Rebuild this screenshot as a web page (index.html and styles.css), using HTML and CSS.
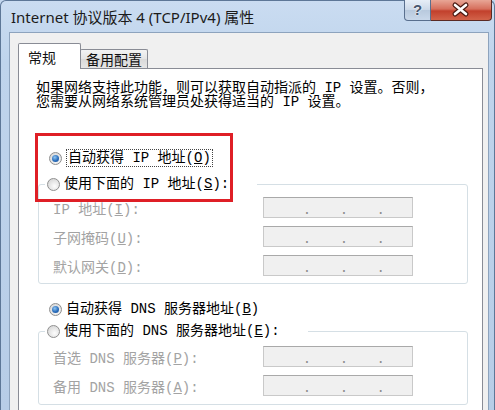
FILE: index.html
```html
<!DOCTYPE html>
<html lang="zh-CN">
<head>
    <meta charset="UTF-8">
    <title>Internet 协议版本 4 (TCP/IPv4) 属性</title>
    <link rel="stylesheet" href="styles.css">
</head>
<body>
    <div class="window">
        <div class="titlebar">
            <div class="title">Internet 协议版本 4 (TCP/IPv4) 属性</div>
            <div class="caption-buttons">
                <div class="btn-help">?</div>
                <div class="btn-close">
                    <svg width="59" height="19" viewBox="0 0 59 19">
                        <path d="M24 5 L35 14 M35 5 L24 14" stroke="#4a1a12" stroke-width="5" stroke-linecap="round"/>
                        <path d="M24 5 L35 14 M35 5 L24 14" stroke="#fff" stroke-width="2.6" stroke-linecap="round"/>
                    </svg>
                </div>
            </div>
        </div>
        <div class="client">
            <div class="tabs">
                <div class="tab active">常规</div>
                <div class="tab">备用配置</div>
            </div>
            <div class="page">
                <p class="intro">如果网络支持此功能，则可以获取自动指派的 IP 设置。否则，<br>您需要从网络系统管理员处获得适当的 IP 设置。</p>

                <div class="option opt-ip"><span class="radio on"></span><span class="label focus">自动获得 IP 地址(<u>O</u>)</span></div>
                <fieldset class="group group-ip">
                    <legend class="option"><span class="radio"></span><span class="label">使用下面的 IP 地址(<u>S</u>):</span></legend>
                    <div class="field"><span class="field-label">IP 地址(<u>I</u>):</span><span class="ip-box"><i>.</i><i>.</i><i>.</i></span></div>
                    <div class="field"><span class="field-label">子网掩码(<u>U</u>):</span><span class="ip-box"><i>.</i><i>.</i><i>.</i></span></div>
                    <div class="field"><span class="field-label">默认网关(<u>D</u>):</span><span class="ip-box"><i>.</i><i>.</i><i>.</i></span></div>
                </fieldset>

                <div class="option opt-dns"><span class="radio on"></span><span class="label">自动获得 DNS 服务器地址(<u>B</u>)</span></div>
                <fieldset class="group group-dns">
                    <legend class="option"><span class="radio"></span><span class="label">使用下面的 DNS 服务器地址(<u>E</u>):</span></legend>
                    <div class="field"><span class="field-label">首选 DNS 服务器(<u>P</u>):</span><span class="ip-box"><i>.</i><i>.</i><i>.</i></span></div>
                    <div class="field"><span class="field-label">备用 DNS 服务器(<u>A</u>):</span><span class="ip-box"><i>.</i><i>.</i><i>.</i></span></div>
                </fieldset>

                <div class="highlight"></div>
            </div>
        </div>
    </div>
</body>
</html>
```

FILE: styles.css
```css
body {
    margin: 0;
    width: 495px;
    height: 410px;
    overflow: hidden;
    background: #c3d7ee;
    font-family: "Noto Sans CJK SC", sans-serif;
}
.window {
    height: 410px;
    border: 1px solid #5d7797;
    border-bottom: 0;
    border-radius: 6px 6px 0 0;
    background: linear-gradient(to bottom, #cadcf1, #bfd4ec 60px, #b7cde7);
    box-sizing: border-box;
}
.titlebar {
    display: flex;
    height: 31px;
}
.title {
    flex: 1;
    padding: 6px 0 0 10px;
    font-family: "Noto Sans", "Noto Sans CJK SC", sans-serif;
    font-size: 15px;
    line-height: 20px;
    color: #1b1b1b;
}
.caption-buttons {
    display: flex;
    align-self: flex-start;
    margin-right: 2px;
    margin-top: -1px;
}
.btn-help {
    width: 27px;
    height: 21px;
    box-sizing: border-box;
    border: 1px solid #596f8e;
    border-top: 0;
    border-radius: 0 0 0 4px;
    background: linear-gradient(to bottom, #e6eef7, #cbd8e8 50%, #b8c9dd 51%, #c9d8ea);
    text-align: center;
    font-family: "Liberation Sans", sans-serif;
    font-weight: bold;
    font-size: 15px;
    line-height: 19px;
    color: #46566e;
    text-shadow: 0 0 2px #fff, 0 0 1px #fff;
}
.btn-close {
    width: 61px;
    height: 21px;
    box-sizing: border-box;
    border: 1px solid #5a2a24;
    border-left: 0;
    border-top: 0;
    border-radius: 0 0 4px 0;
    background: linear-gradient(to bottom, #e8a696, #d66f5c 45%, #c2402c 55%, #d2634a);
}
.client {
    margin: 0 5px 0 8px;
    padding: 10px 5px 0 8px;
    height: 400px;
    background: #f0f0f0;
    border: 1px solid #8da3bd;
    border-bottom: 0;
    box-sizing: border-box;
}
.tabs {
    display: flex;
    align-items: flex-end;
    height: 26px;
    margin-bottom: -1px;
    position: relative;
    z-index: 1;
}
.tab {
    height: 19px;
    width: 68px;
    margin: 0 0 1px -1px;
    padding-left: 5px;
    box-sizing: border-box;
    border: 1px solid #898c95;
    border-bottom: 0;
    border-radius: 2px 2px 0 0;
    background: linear-gradient(to bottom, #f3f3f3, #e5e5e5 50%, #d9d9d9 51%, #e6e6e6);
    font-size: 14px;
    line-height: 18px;
    color: #111;
}
.tab.active {
    height: 26px;
    width: 63px;
    margin: 0;
    padding: 3px 0 0 9px;
    background: #fff;
    line-height: 20px;
}
.page {
    position: relative;
    height: 380px;
    padding: 12px 14px 0 17px;
    background: #fff;
    border: 1px solid #898c95;
    font-family: "Liberation Mono", "Noto Sans CJK SC", monospace;
    font-size: 14px;
    color: #000;
}
.intro {
    margin: 0;
    line-height: 14px;
    white-space: nowrap;
}
.option {
    display: flex;
    align-items: center;
    height: 18px;
    line-height: 18px;
    white-space: nowrap;
}
.opt-ip {
    margin: 40px 0 0 13px;
}
.opt-dns {
    margin: 16px 0 0 13px;
}
.radio {
    display: flex;
    align-items: center;
    justify-content: center;
    width: 13px;
    height: 13px;
    margin-right: 4px;
    box-sizing: border-box;
    border: 1px solid #8f8f8f;
    border-radius: 50%;
    background: radial-gradient(circle at 60% 65%, #fdfdfd, #dcdcdc 70%);
}
.radio.on::after {
    content: "";
    width: 7px;
    height: 7px;
    border-radius: 50%;
    background: radial-gradient(circle at 40% 35%, #8fc6f2, #2a6dbb 55%, #174c92);
}
.label.focus {
    padding: 0 1px;
    border: 1px dotted #444;
    line-height: 16px;
}
.group {
    margin: 8px 0 0 2px;
    padding: 4px 0 7px 14px;
    border: 1px solid #d5dfe5;
    border-radius: 3px;
    display: flex;
    flex-direction: column;
    gap: 8px;
    min-width: 0;
}
.group legend {
    margin-left: -8px;
    padding: 0 28px 0 2px;
}
.group-dns {
    margin-top: 4px;
    padding-top: 6px;
    padding-bottom: 8px;
}
.field {
    display: flex;
    align-items: center;
    height: 21px;
}
.field-label {
    width: 210px;
    color: #a3a3a3;
}
.ip-box {
    display: flex;
    gap: 33px;
    width: 150px;
    height: 21px;
    padding-left: 41px;
    box-sizing: border-box;
    border: 1px solid #c9c9c9;
    border-top-color: #a9a9a9;
    background: #f0f0f0;
    font-family: "Noto Sans CJK SC", sans-serif;
    line-height: 21px;
    color: #8a8a8a;
}
.ip-box i {
    font-style: normal;
}
.highlight {
    position: absolute;
    left: 16px;
    top: 64px;
    width: 198px;
    height: 69px;
    box-sizing: border-box;
    border: 3px solid #df1f26;
}
```
